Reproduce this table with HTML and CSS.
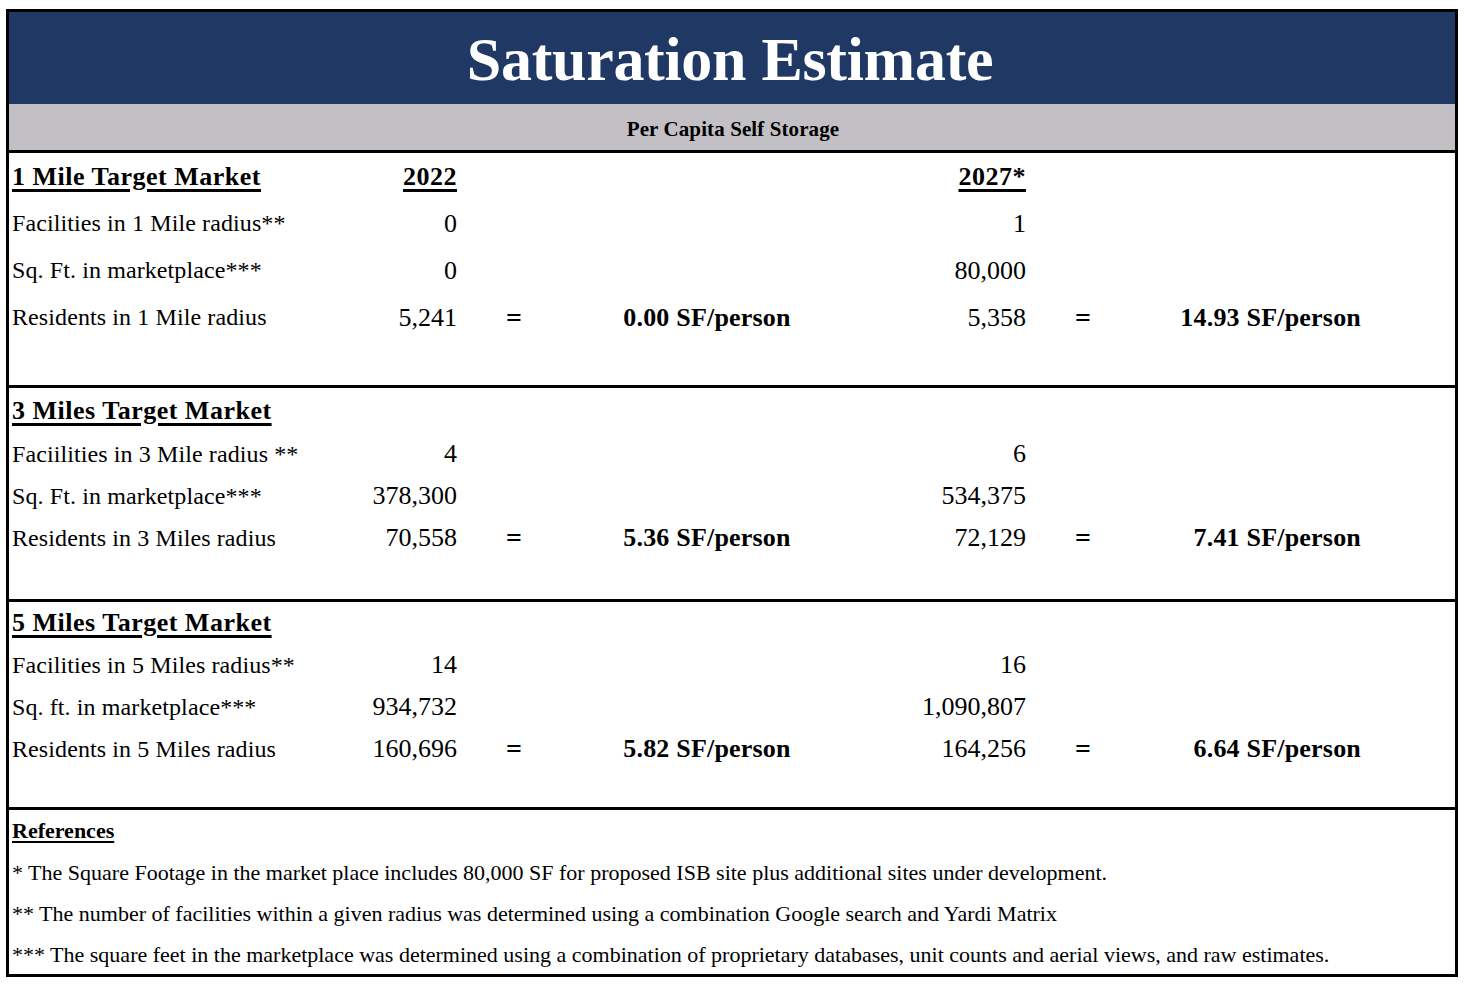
FILE: index.html
```html
<!DOCTYPE html>
<html>
<head>
<meta charset="utf-8">
<link rel="stylesheet" href="styles.css">
</head>
<body>
<div class="sheet">
  <div class="title-band"><h1 class="title">Saturation Estimate</h1></div>
  <div class="sub-band">Per Capita Self Storage</div>

  <section class="block block-1">
    <div class="row">
      <div class="lbl head">1 Mile Target Market</div>
      <div class="num head">2022</div>
      <div></div><div></div>
      <div class="num head">2027*</div>
      <div></div><div></div>
    </div>
    <div class="row">
      <div class="lbl">Facilities in 1 Mile radius**</div>
      <div class="num">0</div><div></div><div></div>
      <div class="num">1</div><div></div><div></div>
    </div>
    <div class="row">
      <div class="lbl">Sq. Ft. in marketplace***</div>
      <div class="num">0</div><div></div><div></div>
      <div class="num">80,000</div><div></div><div></div>
    </div>
    <div class="row">
      <div class="lbl">Residents in 1 Mile radius</div>
      <div class="num">5,241</div>
      <div class="eq">=</div>
      <div class="res1">0.00 SF/person</div>
      <div class="num">5,358</div>
      <div class="eq">=</div>
      <div class="res2">14.93 SF/person</div>
    </div>
  </section>

  <section class="block block-2">
    <div class="row first">
      <div class="lbl head">3 Miles Target Market</div>
    </div>
    <div class="row">
      <div class="lbl">Faciilities in 3 Mile radius **</div>
      <div class="num">4</div><div></div><div></div>
      <div class="num">6</div><div></div><div></div>
    </div>
    <div class="row">
      <div class="lbl">Sq. Ft. in marketplace***</div>
      <div class="num">378,300</div><div></div><div></div>
      <div class="num">534,375</div><div></div><div></div>
    </div>
    <div class="row">
      <div class="lbl">Residents in 3 Miles radius</div>
      <div class="num">70,558</div>
      <div class="eq">=</div>
      <div class="res1">5.36 SF/person</div>
      <div class="num">72,129</div>
      <div class="eq">=</div>
      <div class="res2">7.41 SF/person</div>
    </div>
  </section>

  <section class="block block-3">
    <div class="row">
      <div class="lbl head">5 Miles Target Market</div>
    </div>
    <div class="row">
      <div class="lbl">Facilities in 5 Miles radius**</div>
      <div class="num">14</div><div></div><div></div>
      <div class="num">16</div><div></div><div></div>
    </div>
    <div class="row">
      <div class="lbl">Sq. ft. in marketplace***</div>
      <div class="num">934,732</div><div></div><div></div>
      <div class="num">1,090,807</div><div></div><div></div>
    </div>
    <div class="row">
      <div class="lbl">Residents in 5 Miles radius</div>
      <div class="num">160,696</div>
      <div class="eq">=</div>
      <div class="res1">5.82 SF/person</div>
      <div class="num">164,256</div>
      <div class="eq">=</div>
      <div class="res2">6.64 SF/person</div>
    </div>
  </section>

  <section class="refs">
    <div class="ref-head">References</div>
    <div class="ref">* The Square Footage in the market place includes 80,000 SF for proposed ISB site plus additional sites under development.</div>
    <div class="ref">** The number of facilities within a given radius was determined using a combination Google search and Yardi Matrix</div>
    <div class="ref">*** The square feet in the marketplace was determined using a combination of proprietary databases, unit counts and aerial views, and raw estimates.</div>
  </section>
</div>
</body>
</html>
```
FILE: styles.css
```css
html, body {
  margin: 0;
  padding: 0;
  background: #ffffff;
}
body {
  padding: 9px 0 0 6px;
  font-family: "Liberation Serif", "Times New Roman", serif;
  color: #000;
}
.sheet {
  width: 1446px;
  border: 3px solid #000;
  display: flex;
  flex-direction: column;
}
.title-band {
  height: 92px;
  background: #1f3864;
  display: flex;
  align-items: center;
  justify-content: center;
}
.title {
  margin: 0;
  color: #ffffff;
  font-size: 62px;
  font-weight: bold;
  letter-spacing: -0.3px;
  line-height: 1;
  padding-right: 4px;
  padding-top: 2px;
}
.sub-band {
  height: 49px;
  background: #c2c0c4;
  display: flex;
  align-items: center;
  justify-content: center;
  font-size: 21px;
  font-weight: bold;
  letter-spacing: 0.1px;
  padding-top: 4px;
  padding-left: 2px;
  box-sizing: border-box;
  border-bottom: 3px solid #000;
}
.block {
  border-bottom: 3px solid #000;
  padding-left: 3px;
  box-sizing: border-box;
}
.block-1 { height: 235px; }
.block-2 { height: 214px; }
.block-3 { height: 208px; }
.row {
  display: grid;
  grid-template-columns: 288px 157px 114px 272px 183px 114px 221px;
  align-items: center;
  font-size: 24px;
  height: 42px;
}
.block-1 .row { height: 47px; }
.block-2 .row.first { height: 45px; }
.lbl {
  white-space: nowrap;
  letter-spacing: 0.1px;
}
.head {
  font-size: 26px;
  font-weight: bold;
  text-decoration: underline;
  text-decoration-thickness: 3px;
  text-underline-offset: 4px;
  letter-spacing: 0.5px;
}
.num {
  text-align: right;
  font-size: 26px;
}
.num.head { letter-spacing: 0.5px; }
.eq {
  text-align: center;
  font-weight: bold;
  font-size: 28px;
}
.res1 {
  text-align: center;
  font-weight: bold;
  font-size: 26px;
  letter-spacing: 0.2px;
}
.res2 {
  text-align: right;
  font-weight: bold;
  font-size: 26px;
  letter-spacing: 0.2px;
}
.refs {
  padding-left: 3px;
  height: 164px;
}
.ref-head {
  height: 42px;
  display: flex;
  align-items: center;
  font-size: 22px;
  font-weight: bold;
  text-decoration: underline;
  text-decoration-thickness: 2px;
  text-underline-offset: 3px;
}
.ref {
  height: 41px;
  display: flex;
  align-items: center;
  font-size: 22px;
  white-space: nowrap;
}
```
